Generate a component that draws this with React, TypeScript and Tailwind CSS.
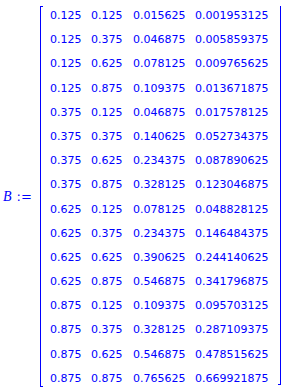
// App.tsx
const rows: string[][] = [
  ['0.125', '0.125', '0.015625', '0.001953125'],
  ['0.125', '0.375', '0.046875', '0.005859375'],
  ['0.125', '0.625', '0.078125', '0.009765625'],
  ['0.125', '0.875', '0.109375', '0.013671875'],
  ['0.375', '0.125', '0.046875', '0.017578125'],
  ['0.375', '0.375', '0.140625', '0.052734375'],
  ['0.375', '0.625', '0.234375', '0.087890625'],
  ['0.375', '0.875', '0.328125', '0.123046875'],
  ['0.625', '0.125', '0.078125', '0.048828125'],
  ['0.625', '0.375', '0.234375', '0.146484375'],
  ['0.625', '0.625', '0.390625', '0.244140625'],
  ['0.625', '0.875', '0.546875', '0.341796875'],
  ['0.875', '0.125', '0.109375', '0.095703125'],
  ['0.875', '0.375', '0.328125', '0.287109375'],
  ['0.875', '0.625', '0.546875', '0.478515625'],
  ['0.875', '0.875', '0.765625', '0.669921875'],
];

export default function App() {
  return (
    <div className="w-[286px] h-[391px] bg-white flex text-[#0000ff] overflow-hidden">
      {/* label */}
      <div className="w-[40px] h-full flex items-center pl-[3px] pt-[2px]">
        <span className="italic text-[14px] font-['Liberation_Serif',serif]">B</span>
        <span className="ml-[5px] text-[13px] font-['DejaVu_Sans',sans-serif]">:=</span>
      </div>

      {/* left bracket */}
      <div className="w-[3px] h-[381px] mt-[6px] border-l border-t border-b border-[#0000ff]" />

      <div className="mt-[4px] ml-[7px] grid grid-cols-[41px_42px_62px_auto] font-['DejaVu_Sans',sans-serif] text-[11px] leading-[24px]">
        {rows.map((r, i) =>
          r.map((v, j) => (
            <span key={i + '-' + j} className="whitespace-nowrap">
              {v}
            </span>
          ))
        )}
      </div>

      {/* right bracket */}
      <div className="w-[3px] h-[379px] mt-[6px] ml-auto mr-[5px] border-r border-b border-[#0000ff]" />
    </div>
  );
}
